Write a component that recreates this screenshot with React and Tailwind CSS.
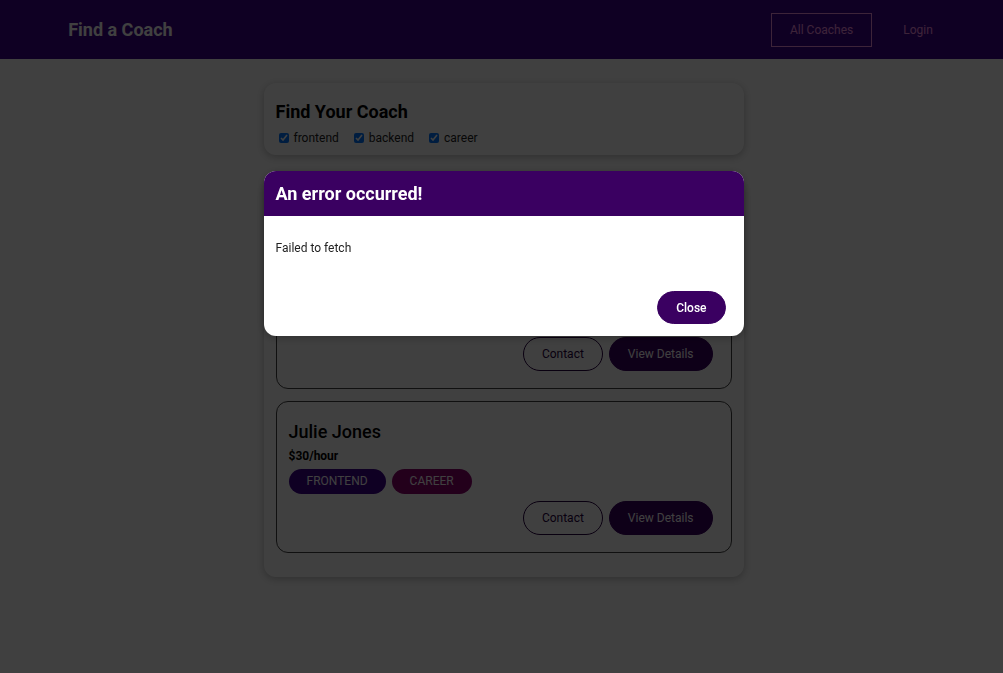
import { useState } from 'react';

const coaches = [
  { id: 'c1', name: 'Maximilian Schwarzmüller', rate: 30, areas: ['frontend', 'backend', 'career'] },
  { id: 'c2', name: 'Julie Jones', rate: 30, areas: ['frontend', 'career'] },
];

const badgeColors = {
  frontend: 'bg-[#3d008d]',
  backend: 'bg-[#71008d]',
  career: 'bg-[#8d006e]',
};

const Badge = ({ type }) => (
  <span className={`inline-block ${badgeColors[type]} text-white uppercase rounded-[30px] px-[18px] h-[25px] leading-[25px] mr-[6px] text-[12px]`}>
    {type}
  </span>
);

const OutlineButton = ({ children }) => (
  <button className="h-[34px] px-[18px] rounded-[30px] border border-[#270041] text-[#270041] bg-transparent text-[12px] mr-[6px]">
    {children}
  </button>
);

const FilledButton = ({ children }) => (
  <button className="h-[34px] px-[18px] rounded-[30px] border border-[#3a0061] bg-[#3a0061] text-white text-[12px] mr-[6px]">
    {children}
  </button>
);

const CoachItem = ({ coach }) => (
  <li className="border border-[#424242] rounded-[12px] px-[12px] pt-[13px] pb-[17px] my-[12px]">
    <h3 className="text-[18px] font-medium leading-[21px] mt-[6px] mb-[7px]">{coach.name}</h3>
    <h4 className="text-[12px] font-bold leading-[14px] mb-[6px]">${coach.rate}/hour</h4>
    <div>
      {coach.areas.map((a) => (
        <Badge key={a} type={a} />
      ))}
    </div>
    <div className="flex justify-end mt-[7px]">
      <OutlineButton>Contact</OutlineButton>
      <FilledButton>View Details</FilledButton>
    </div>
  </li>
);

const App = () => {
  const [filters, setFilters] = useState({ frontend: true, backend: true, career: true });

  return (
    <div className="min-h-[673px] bg-white text-[12px] text-black font-['Roboto',sans-serif]">
      {/* Header */}
      <header className="h-[59px] bg-[#3d008d]">
        <nav className="w-[90%] mx-auto h-full flex items-center justify-between">
          <h1 className="text-[18px] font-bold">
            <a className="text-white px-[18px]">Find a Coach</a>
          </h1>
          <ul className="flex items-center -mr-[5px]">
            <li className="mx-[6px]">
              <a className="block h-[34px] leading-[32px] px-[18px] border border-[#f391e3] text-[#f391e3]">All Coaches</a>
            </li>
            <li className="mx-[6px]">
              <a className="block h-[34px] leading-[32px] px-[18px] border border-transparent text-[#f391e3]">Login</a>
            </li>
          </ul>
        </nav>
      </header>

      <main className="pl-[4px] pb-[24px]">
        {/* Filter */}
        <section className="w-[480px] mx-auto mt-[24px] rounded-[12px] shadow-[0_2px_8px_rgba(0,0,0,0.26)] px-[12px] pt-[12px] pb-[9px]">
          <h2 className="text-[18px] font-bold leading-[21px] my-[6px]">Find Your Coach</h2>
          <div className="flex items-center h-[16px] mt-[8px]">
            {Object.keys(filters).map((key) => (
              <span key={key} className="flex items-center mr-[12px]">
                <input
                  type="checkbox"
                  id={key}
                  checked={filters[key]}
                  onChange={() => setFilters({ ...filters, [key]: !filters[key] })}
                  className="w-[10px] h-[10px] ml-[3px] accent-[#0075ff]"
                />
                <label htmlFor={key} className="ml-[5px] text-[12px] text-[#222]">{key}</label>
              </span>
            ))}
          </div>
        </section>

        {/* Coach list */}
        <section className="w-[480px] mx-auto mt-[24px] rounded-[12px] shadow-[0_2px_8px_rgba(0,0,0,0.26)] p-[12px]">
          <div className="flex justify-between">
            <OutlineButton>Refresh</OutlineButton>
            <FilledButton>Register as Coach</FilledButton>
          </div>
          <ul>
            {coaches.map((c) => (
              <CoachItem key={c.id} coach={c} />
            ))}
          </ul>
        </section>
      </main>

      {/* Backdrop */}
      <div className="fixed inset-0 bg-black/75 z-10" />

      {/* Error dialog */}
      <dialog open className="fixed top-[171px] left-[calc(50%-238px)] w-[480px] m-0 p-0 border-0 rounded-[12px] overflow-hidden bg-white z-20 shadow-[0_2px_8px_rgba(0,0,0,0.26)]">
        <header className="bg-[#3a0061] text-white p-[12px]">
          <h2 className="text-[18px] font-bold leading-[21px] m-0">An error occurred!</h2>
        </header>
        <section className="p-[12px]">
          <p className="mt-[13px] mb-[11px] text-[12px] leading-[14px] text-[#222]">Failed to fetch</p>
        </section>
        <menu className="flex justify-end px-[12px] pt-[13px] pb-[12px] m-0">
          <button className="h-[33px] px-[18px] mr-[6px] rounded-[30px] bg-[#3a0061] border border-[#3a0061] text-white text-[12px] font-medium">
            Close
          </button>
        </menu>
      </dialog>
    </div>
  );
};

export default App;
